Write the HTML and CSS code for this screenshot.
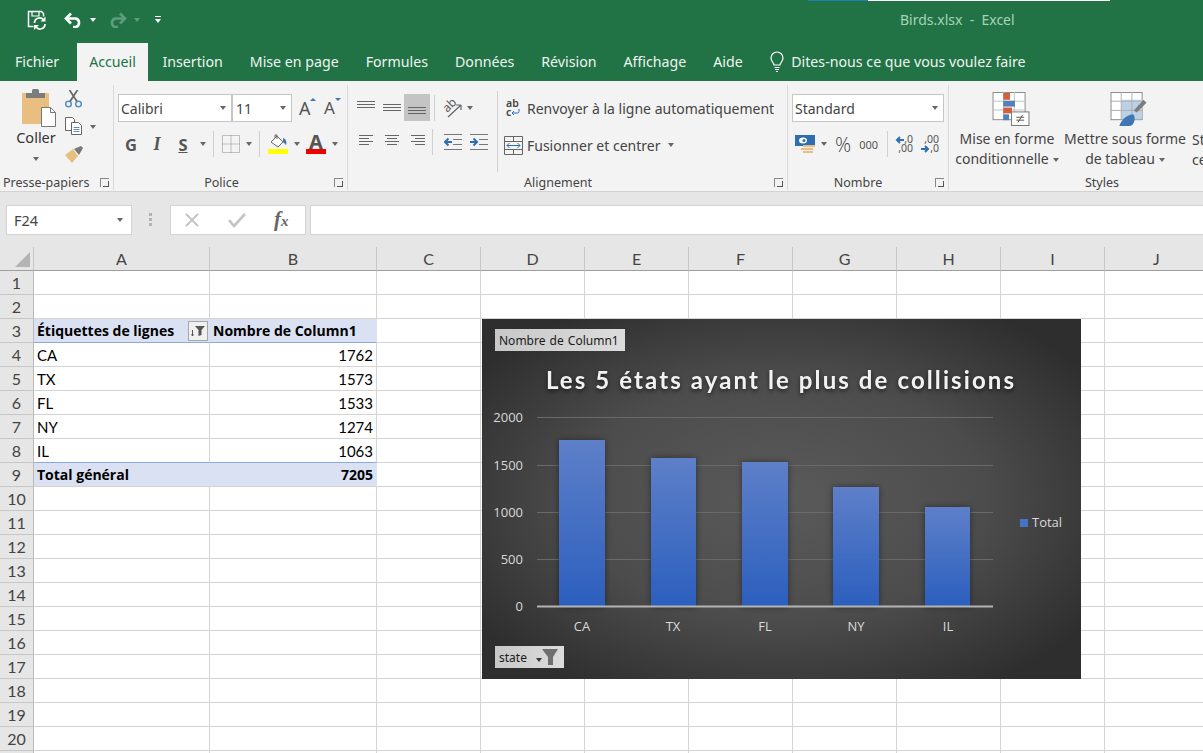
FILE: index.html
```html
<!DOCTYPE html>
<html lang="fr">

<head>
    <meta charset="utf-8">
    <title>Birds.xlsx - Excel</title>
    <link rel="stylesheet" href="styles.css">
</head>

<body>
    <header class="titlebar">
        <div class="topline"><span class="topline-blue"></span><span class="topline-white"></span></div>
        <div class="qat">
            <svg class="qat-save" width="20" height="20" viewBox="0 0 20 20" fill="none" stroke="#fff" stroke-width="1.500">
                <path d="M6.500 16.500H1.500v-15h13l2 2v3" />
                <path d="M5 2v4h7V2" stroke-width="1.200" />
                <path d="M7.500 13a5 5 0 0 1 9-3" stroke-width="1.800" />
                <path d="M18 14a5 5 0 0 1-9 3" stroke-width="1.800" />
                <path d="M18.500 6.500v5h-5zM7 20v-5h5z" fill="#fff" stroke="none" />
            </svg>
            <svg class="qat-undo" width="19" height="16" viewBox="0 0 19 16" fill="none" stroke="#fff" stroke-width="2.600">
                <path d="M2 6.500h10a4.500 4.500 0 0 1 0 8.500H9" />
                <path d="M7 1.500L2 6.500l5 5" />
            </svg>
            <span class="caret caret-white"></span>
            <svg class="qat-redo" width="19" height="16" viewBox="0 0 19 16" fill="none" stroke="#5f9c7d" stroke-width="2.600">
                <path d="M17 6.500H7a4.500 4.500 0 0 0 0 8.500h3" />
                <path d="M12 1.500l5 5-5 5" />
            </svg>
            <span class="caret caret-dim"></span>
            <span class="qat-more"></span>
        </div>
        <div class="doc-title">Birds.xlsx&nbsp; - &nbsp;Excel</div>
    </header>

    <nav class="tabs">
        <a class="tab tab-first">Fichier</a>
        <a class="tab tab-active">Accueil</a>
        <a class="tab">Insertion</a>
        <a class="tab">Mise en page</a>
        <a class="tab">Formules</a>
        <a class="tab">Données</a>
        <a class="tab">Révision</a>
        <a class="tab">Affichage</a>
        <a class="tab">Aide</a>
        <div class="tell">
            <svg width="16" height="22" viewBox="0 0 16 22" fill="none" stroke="#fff" stroke-width="1.200">
                <path d="M5 14c0-2-3-3.500-3-7a6 6 0 0 1 12 0c0 3.500-3 5-3 7z" />
                <path d="M5.500 16.500h5M6 18.500h4M7 20.500h2" />
            </svg>
            <span>Dites-nous ce que vous voulez faire</span>
        </div>
    </nav>

    <section class="ribbon">
        <div class="group group-clip">
            <div class="group-body clip-body">
                <div class="paste">
                    <svg width="34" height="38" viewBox="0 0 34 38">
                        <rect x="0" y="4" width="27" height="31" rx="1" fill="#e8bf80" />
                        <path d="M4 9V4h6V1.500A1.500 1.500 0 0 1 11.500 0h4A1.500 1.500 0 0 1 17 1.500V4h6v5z" fill="#7c7c7c" />
                        <path d="M19.500 18.500h9l5 5v14h-14z" fill="#fff" stroke="#777" />
                        <path d="M28.500 18.500v5h5" fill="none" stroke="#777" />
                    </svg>
                    <span class="paste-label">Coller</span>
                    <span class="caret"></span>
                </div>
                <div class="clip-tools">
                    <svg width="17" height="18" viewBox="0 0 17 18" fill="none" stroke="#5b8fc4" stroke-width="1.500">
                        <circle cx="3.500" cy="14" r="2.800" />
                        <circle cx="13.500" cy="14" r="2.800" />
                        <path d="M5 11.500L12.500 0M12 11.500L4.500 0" stroke="#666" stroke-width="1.700" />
                    </svg>
                    <div class="tool-row">
                        <svg width="18" height="19" viewBox="0 0 18 19" fill="#fff" stroke="#666">
                            <path d="M.5.500h7l2 2v11h-9z" />
                            <path d="M6.500 5.500h7l3 3v9h-10z" />
                            <path d="M8.500 10.500h6M8.500 12.500h6M8.500 14.500h6" stroke="#5b8fc4" />
                        </svg>
                        <span class="caret"></span>
                    </div>
                    <svg width="18" height="17" viewBox="0 0 18 17">
                        <path d="M0 9l8-6 5 7-6 7z" fill="#e8bf80" />
                        <path d="M9 3l7-3 2 2-4 7z" fill="#777" />
                    </svg>
                </div>
            </div>
            <div class="group-label">Presse-papiers<span class="launcher"></span></div>
        </div>

        <div class="group group-font">
            <div class="group-body stacked">
                <div class="ribbon-row">
                    <div class="combo combo-font"><span>Calibri</span><span class="caret"></span></div>
                    <div class="combo combo-size"><span>11</span><span class="caret"></span></div>
                    <span class="grow-btn">A<i class="tip tip-up"></i></span>
                    <span class="grow-btn grow-small">A<i class="tip tip-down"></i></span>
                </div>
                <div class="ribbon-row font-row">
                    <b class="fmt fmt-g">G</b>
                    <i class="fmt fmt-i">I</i>
                    <b class="fmt fmt-s">S</b>
                    <span class="caret"></span>
                    <span class="vsep"></span>
                    <svg width="18" height="18" viewBox="0 0 18 18" fill="none" stroke="#8a8a8a" stroke-dasharray="1 1">
                        <path d="M.5.500h17v17H.5zM9 .500v17M.5 9h17" />
                    </svg>
                    <span class="caret"></span>
                    <span class="vsep"></span>
                    <div class="colour-btn">
                        <svg width="20" height="15" viewBox="0 0 20 15">
                            <path d="M3 8l6-6 6 6-5 5z" fill="#fff" stroke="#666" />
                            <path d="M7 4V1h2v4" fill="none" stroke="#666" />
                            <path d="M15 4c3 1 4 4 3 7l-3-3z" fill="#3f77b5" />
                        </svg>
                        <span class="swatch swatch-yellow"></span>
                    </div>
                    <span class="caret"></span>
                    <div class="colour-btn colour-a">
                        <span class="colour-letter">A</span>
                        <span class="swatch swatch-red"></span>
                    </div>
                    <span class="caret"></span>
                </div>
            </div>
            <div class="group-label">Police<span class="launcher"></span></div>
        </div>

        <div class="group group-align">
            <div class="group-body align-body">
                <div class="stacked align-grid">
                    <div class="ribbon-row">
                        <span class="lines lines-top"><i></i><i></i><i></i></span>
                        <span class="lines lines-mid"><i></i><i></i><i></i></span>
                        <span class="lines lines-bot lines-on"><i></i><i></i><i></i></span>
                        <span class="vsep vsep-tall"></span>
                        <svg class="orient" width="22" height="20" viewBox="0 0 22 20" fill="none" stroke="#666">
                            <text transform="rotate(-45 8 8)" x="1" y="11" class="orient-text">ab</text>
                            <path d="M6 19L19 7M19 7h-5M19 7v5" stroke-width="1.200" />
                        </svg>
                        <span class="caret"></span>
                    </div>
                    <div class="ribbon-row align-row2">
                        <span class="lines lines-left"><i></i><i></i><i></i><i></i></span>
                        <span class="lines lines-center"><i></i><i></i><i></i><i></i></span>
                        <span class="lines lines-right"><i></i><i></i><i></i><i></i></span>
                        <span class="vsep vsep-tall"></span>
                        <svg class="indent-left" width="18" height="16" viewBox="0 0 18 16" fill="none" stroke="#777">
                            <path d="M0 .500h18M9 5.500h9M9 10.500h9M0 15.500h18" />
                            <path d="M1 8h7M4.500 4.500L1 8l3.500 3.500" stroke="#2e6fb0" stroke-width="2" />
                        </svg>
                        <svg class="indent-right" width="18" height="16" viewBox="0 0 18 16" fill="none" stroke="#777">
                            <path d="M0 .500h18M9 5.500h9M9 10.500h9M0 15.500h18" />
                            <path d="M0 8h7M3.500 4.500L7 8l-3.500 3.500" stroke="#2e6fb0" stroke-width="2" />
                        </svg>
                    </div>
                </div>
                <span class="vsep vsep-full"></span>
                <div class="stacked wrap-col">
                    <div class="ribbon-row wrap-row">
                        <span class="abc">ab<br>c<svg width="9" height="8" viewBox="0 0 9 8" fill="none" stroke="#2e6fb0"><path d="M8 1v2.500a1.500 1.500 0 0 1-1.500 1.500H1M3 3L1 5l2 2" /></svg></span>
                        <span>Renvoyer à la ligne automatiquement</span>
                    </div>
                    <div class="ribbon-row merge-row">
                        <svg width="19" height="19" viewBox="0 0 19 19" fill="none" stroke="#666">
                            <path d="M.5.500h18v18H.5zM.5 5.500h18M.5 13.500h18M9.500.500v5M9.500 13.500v5" />
                            <path d="M3 9.500h13M5.500 7L3 9.500 5.500 12M13.500 7l2.500 2.500-2.500 2.500" stroke="#2e6fb0" />
                        </svg>
                        <span>Fusionner et centrer</span>
                        <span class="caret"></span>
                    </div>
                </div>
            </div>
            <div class="group-label">Alignement<span class="launcher"></span></div>
        </div>

        <div class="group group-number">
            <div class="group-body stacked">
                <div class="ribbon-row">
                    <div class="combo combo-format"><span>Standard</span><span class="caret"></span></div>
                </div>
                <div class="ribbon-row number-row">
                    <svg width="21" height="19" viewBox="0 0 21 19">
                        <rect x="0" y="0" width="20" height="11" fill="#2e6fb0" />
                        <ellipse cx="8" cy="5.500" rx="4" ry="3" fill="#fff" />
                        <circle cx="9" cy="5.500" r="1.500" fill="#2e6fb0" />
                        <path d="M8 10h12v2H8zM6 13h12v2H6zM8 16h10v2H8z" fill="#e8bf80" />
                    </svg>
                    <span class="caret"></span>
                    <span class="percent">%</span>
                    <span class="thousands">000</span>
                    <span class="vsep"></span>
                    <span class="decimal">
                        <span class="dec-line"><svg width="9" height="8" viewBox="0 0 9 8" fill="none" stroke="#2e6fb0" stroke-width="2"><path d="M9 4H2M5 1L2 4l3 3" /></svg>,0</span>
                        <span class="dec-line">,00</span>
                    </span>
                    <span class="decimal decimal-b">
                        <span class="dec-line">,00</span>
                        <span class="dec-line"><svg width="9" height="8" viewBox="0 0 9 8" fill="none" stroke="#2e6fb0" stroke-width="2"><path d="M0 4h7M4 1l3 3-3 3" /></svg>,0</span>
                    </span>
                </div>
            </div>
            <div class="group-label">Nombre<span class="launcher"></span></div>
        </div>

        <div class="group group-styles">
            <div class="group-body styles-body">
                <div class="big-btn big-cond">
                    <svg width="38" height="35" viewBox="0 0 38 35">
                        <rect x=".5" y=".5" width="33" height="28" fill="#fff" stroke="#8a8a8a" />
                        <path d="M11.500 0v28M22.500 0v28M0 9.500h34M0 18.500h34" stroke="#c0c0c0" />
                        <rect x="11" y="1" width="7" height="7" fill="#d2603f" />
                        <rect x="11" y="9" width="12" height="6" fill="#4f81bd" />
                        <rect x="11" y="16" width="9" height="6" fill="#d2603f" />
                        <rect x="11" y="23" width="6" height="6" fill="#4f81bd" />
                        <rect x="19.500" y="20.500" width="18" height="14" fill="#fff" stroke="#777" />
                        <path d="M24.500 26h8M24.500 29h8M31 23.500l-5 8" fill="none" stroke="#555" />
                    </svg>
                    <span>Mise en forme<br>conditionnelle<i class="caret caret-inline"></i></span>
                </div>
                <div class="big-btn big-table">
                    <svg width="38" height="35" viewBox="0 0 38 35">
                        <rect x=".5" y=".5" width="32" height="28" fill="#fff" stroke="#8a8a8a" />
                        <rect x="11" y="8" width="21" height="20" fill="#bcd0e6" />
                        <path d="M11 0v28M22 0v28M0 9.500h33M0 19h33" stroke="#b0b0b0" />
                        <path d="M24 19l10-11 3 3-10 10z" fill="#7c7c7c" />
                        <path d="M9 35c2-6 7-11 14-12 4 3 1 12-3 12z" fill="#3f77b5" />
                    </svg>
                    <span>Mettre sous forme<br>de tableau<i class="caret caret-inline"></i></span>
                </div>
                <div class="big-btn big-cell">
                    <span>Styles de<br>cellule</span>
                </div>
            </div>
            <div class="group-label group-label-styles">Styles</div>
        </div>
    </section>

    <section class="formula">
        <div class="namebox"><span>F24</span><span class="caret"></span></div>
        <span class="grip"></span>
        <div class="fx-box">
            <svg width="16" height="16" viewBox="0 0 16 16" fill="none" stroke="#c4c4c4" stroke-width="1.800"><path d="M2 2l12 12M14 2L2 14" /></svg>
            <svg width="18" height="16" viewBox="0 0 18 16" fill="none" stroke="#c4c4c4" stroke-width="2.600"><path d="M1 8l5 6L17 2" /></svg>
            <span class="fx">f<small>x</small></span>
        </div>
        <div class="formula-input"></div>
    </section>

    <main class="sheet">
        <table class="cells">
            <colgroup>
                <col class="c-row"><col class="c-a"><col class="c-b"><col class="c-std" span="8">
            </colgroup>
            <thead>
                <tr>
                    <th class="corner"><span class="corner-tri"></span></th>
                    <th>A</th><th>B</th><th>C</th><th>D</th><th>E</th><th>F</th><th>G</th><th>H</th><th>I</th><th>J</th>
                </tr>
            </thead>
            <tbody>
                <tr><th>1</th><td></td><td></td><td></td><td></td><td></td><td></td><td></td><td></td><td></td><td></td></tr>
                <tr><th>2</th><td></td><td></td><td></td><td></td><td></td><td></td><td></td><td></td><td></td><td></td></tr>
                <tr class="pivot-head"><th>3</th>
                    <td class="pivot"><div class="pivot-label"><span>Étiquettes de lignes</span>
                        <span class="filter-btn"><svg width="14" height="12" viewBox="0 0 14 12"><path d="M4 1h10L10.500 5v5L7.500 11V5z" fill="#555" /><path d="M1.500 5v6M.5 9.500l1 1.500 1-1.500" fill="none" stroke="#555" /></svg></span></div></td>
                    <td class="pivot">Nombre de Column1</td>
                    <td></td><td></td><td></td><td></td><td></td><td></td><td></td><td></td></tr>
                <tr><th>4</th><td>CA</td><td class="num">1762</td><td></td><td></td><td></td><td></td><td></td><td></td><td></td><td></td></tr>
                <tr><th>5</th><td>TX</td><td class="num">1573</td><td></td><td></td><td></td><td></td><td></td><td></td><td></td><td></td></tr>
                <tr><th>6</th><td>FL</td><td class="num">1533</td><td></td><td></td><td></td><td></td><td></td><td></td><td></td><td></td></tr>
                <tr><th>7</th><td>NY</td><td class="num">1274</td><td></td><td></td><td></td><td></td><td></td><td></td><td></td><td></td></tr>
                <tr class="before-total"><th>8</th><td>IL</td><td class="num">1063</td><td></td><td></td><td></td><td></td><td></td><td></td><td></td><td></td></tr>
                <tr class="pivot-total"><th>9</th><td class="pivot">Total général</td><td class="pivot num">7205</td><td></td><td></td><td></td><td></td><td></td><td></td><td></td><td></td></tr>
                <tr><th>10</th><td></td><td></td><td></td><td></td><td></td><td></td><td></td><td></td><td></td><td></td></tr>
                <tr><th>11</th><td></td><td></td><td></td><td></td><td></td><td></td><td></td><td></td><td></td><td></td></tr>
                <tr><th>12</th><td></td><td></td><td></td><td></td><td></td><td></td><td></td><td></td><td></td><td></td></tr>
                <tr><th>13</th><td></td><td></td><td></td><td></td><td></td><td></td><td></td><td></td><td></td><td></td></tr>
                <tr><th>14</th><td></td><td></td><td></td><td></td><td></td><td></td><td></td><td></td><td></td><td></td></tr>
                <tr><th>15</th><td></td><td></td><td></td><td></td><td></td><td></td><td></td><td></td><td></td><td></td></tr>
                <tr><th>16</th><td></td><td></td><td></td><td></td><td></td><td></td><td></td><td></td><td></td><td></td></tr>
                <tr><th>17</th><td></td><td></td><td></td><td></td><td></td><td></td><td></td><td></td><td></td><td></td></tr>
                <tr><th>18</th><td></td><td></td><td></td><td></td><td></td><td></td><td></td><td></td><td></td><td></td></tr>
                <tr><th>19</th><td></td><td></td><td></td><td></td><td></td><td></td><td></td><td></td><td></td><td></td></tr>
                <tr><th>20</th><td></td><td></td><td></td><td></td><td></td><td></td><td></td><td></td><td></td><td></td></tr>
                <tr><th></th><td></td><td></td><td></td><td></td><td></td><td></td><td></td><td></td><td></td><td></td></tr>
            </tbody>
        </table>

        <div class="chart">
            <svg class="chart-svg" width="599" height="360" viewBox="0 0 599 360">
                <defs>
                    <linearGradient id="bar" x1="0" y1="0" x2="0" y2="1">
                        <stop offset="0" stop-color="#5e7fc8" />
                        <stop offset="1" stop-color="#2b5fbe" />
                    </linearGradient>
                    <filter id="soft" x="-30%" y="-10%" width="160%" height="120%">
                        <feDropShadow dx="0" dy="0" stdDeviation="3" flood-color="#000" flood-opacity=".45" />
                    </filter>
                </defs>
                <text class="chart-title" x="299" y="70" text-anchor="middle">Les 5 états ayant le plus de collisions</text>
                <g class="grid-lines">
                    <path d="M55 98.500h456M55 146.500h456M55 193.500h456M55 240.500h456" />
                </g>
                <g filter="url(#soft)">
                    <rect x="77" y="121" width="46" height="166.500" fill="url(#bar)" />
                    <rect x="169" y="139" width="45" height="148.500" fill="url(#bar)" />
                    <rect x="260" y="143" width="46" height="144.500" fill="url(#bar)" />
                    <rect x="351" y="168" width="46" height="119.500" fill="url(#bar)" />
                    <rect x="443" y="188" width="45" height="99.500" fill="url(#bar)" />
                </g>
                <path class="axis" d="M55 287.500h456" />
                <g class="y-labels" text-anchor="end">
                    <text x="41" y="103">2000</text>
                    <text x="41" y="151">1500</text>
                    <text x="41" y="198">1000</text>
                    <text x="41" y="245">500</text>
                    <text x="41" y="292">0</text>
                </g>
                <g class="x-labels" text-anchor="middle">
                    <text x="100" y="312">CA</text>
                    <text x="191" y="312">TX</text>
                    <text x="283" y="312">FL</text>
                    <text x="374" y="312">NY</text>
                    <text x="466" y="312">IL</text>
                </g>
                <rect x="538" y="200" width="8" height="8" fill="#4472c4" />
                <text class="legend" x="550" y="208">Total</text>
            </svg>
            <div class="field-btn field-top">Nombre de Column1</div>
            <div class="field-btn field-state">
                <span>state</span>
                <span class="caret caret-dark"></span>
                <svg width="16" height="16" viewBox="0 0 16 16"><path d="M0 0h16l-5 8v8H6V8z" fill="#6f6f6f" /></svg>
            </div>
        </div>
    </main>
</body>

</html>
```

FILE: styles.css
```css
* {
    box-sizing: border-box;
}

html, body {
    margin: 0;
    height: 753px;
    overflow: hidden;
    background: #fff;
}

body {
    font-family: "Noto Sans", "Open Sans", sans-serif;
    font-size: 14px;
    color: #444;
}

.caret {
    display: inline-block;
    width: 0;
    height: 0;
    border-left: 3.500px solid transparent;
    border-right: 3.500px solid transparent;
    border-top: 4px solid #666;
    flex: none;
}

.caret-white { border-top-color: #fff; }
.caret-dim { border-top-color: #5f9c7d; }
.caret-dark { border-top-color: #333; }

/* title bar */
.titlebar {
    height: 43px;
    background: #217346;
    position: relative;
    display: flex;
    align-items: center;
}

.topline {
    position: absolute;
    top: 0;
    left: 808px;
    height: 1px;
    display: flex;
}

.topline-blue { width: 60px; background: #1f7fb0; }
.topline-white { width: 242px; background: #fff; }

.qat {
    display: flex;
    align-items: center;
    padding-left: 27px;
    margin-top: -4px;
}

.qat .caret { margin-left: 7px; }
.qat-undo { margin-left: 17px; }
.qat-redo { margin-left: 12px; }
.qat-more {
    margin-left: 15px;
    width: 6px;
    height: 7px;
    border-top: 1px solid #fff;
    position: relative;
}

.qat-more::after {
    content: "";
    position: absolute;
    left: 0;
    top: 2px;
    border-left: 3px solid transparent;
    border-right: 3px solid transparent;
    border-top: 4px solid #fff;
}

.doc-title {
    margin-left: 739px;
    margin-top: -4px;
    color: #a6d3b9;
    font-size: 14px;
}

/* tabs */
.tabs {
    height: 38px;
    background: #217346;
    display: flex;
    align-items: stretch;
    color: #eef5f0;
}

.tab {
    padding: 0 13.500px;
    line-height: 37px;
    font-size: 14.200px;
}

.tab-first { padding-left: 15px; padding-right: 17.500px; }

.tab-active {
    background: #f3f3f3;
    color: #217346;
    padding: 0 12.500px;
    height: 38px;
}

.tab-active + .tab { padding-left: 14px; }

.tell {
    display: flex;
    align-items: center;
    gap: 6px;
    margin-left: 13px;
    margin-top: -1px;
    font-size: 14.200px;
}

/* ribbon */
.ribbon {
    height: 111px;
    background: #f3f3f3;
    border-bottom: 1px solid #d2d2d2;
    display: flex;
    overflow: hidden;
    position: relative;
}

.group {
    flex: none;
    height: 105px;
    margin-top: 4px;
    border-right: 1px solid #d9d9d9;
    display: flex;
    flex-direction: column;
    position: relative;
}

.group-clip { width: 114px; }
.group-font { width: 234px; padding-left: 4px; }
.group-align { width: 440px; padding-left: 7px; }
.group-number { width: 161px; padding-left: 4px; }
.group-styles { width: 260px; border-right: 0; }

.group-body {
    flex: 1;
    min-height: 0;
}

.group-label {
    height: 21px;
    font-size: 12.500px;
    line-height: 21px;
    text-align: center;
    position: relative;
    top: 3px;
    color: #444;
}

.group-clip .group-label { text-align: left; padding-left: 3px; }
.group-font .group-label { padding-right: 22px; }
.group-align .group-label { padding-right: 26px; }
.group-number .group-label { padding-right: 24px; }
.group-label-styles { width: 306px; }

.launcher {
    position: absolute;
    right: 4px;
    top: 6px;
    width: 9px;
    height: 9px;
    border-left: 1px solid #888;
    border-top: 1px solid #888;
}

.launcher::after {
    content: "";
    position: absolute;
    right: 0;
    bottom: 0;
    width: 5px;
    height: 5px;
    border-right: 1px solid #555;
    border-bottom: 1px solid #555;
}

.stacked {
    display: flex;
    flex-direction: column;
}

.ribbon-row {
    display: flex;
    align-items: center;
}

.vsep {
    width: 1px;
    height: 26px;
    background: #d0d0d0;
    flex: none;
}

/* clipboard */
.clip-body {
    display: flex;
    padding-left: 14px;
}

.paste {
    width: 44px;
    display: flex;
    flex-direction: column;
    align-items: center;
    padding-top: 4px;
}

.paste svg { margin-left: 5px; }
.paste-label { font-size: 14.500px; margin-top: 0; line-height: 20px; color: #333; }
.paste .caret { margin-top: 10px; }

.clip-tools {
    display: flex;
    flex-direction: column;
    padding: 5px 0 0 7px;
    gap: 9px;
}

.tool-row {
    display: flex;
    align-items: center;
    gap: 7px;
}

.clip-tools > svg:last-child { margin-top: 1px; }

/* font */
.stacked { padding-top: 9px; }

.combo {
    height: 28px;
    background: #fff;
    border: 1px solid #c6c6c6;
    display: flex;
    align-items: center;
    justify-content: space-between;
    padding: 0 5px 0 2px;
    font-size: 14px;
    color: #444;
}

.combo-font { width: 114px; }
.combo-size { width: 60px; margin-left: 0; padding-left: 3px; }
.combo-format { width: 152px; }

.grow-btn {
    font-size: 18px;
    color: #555;
    margin-left: 7px;
    width: 17px;
    position: relative;
    line-height: 20px;
}

.grow-btn + .grow-btn { margin-left: 8px; }
.grow-small { font-size: 17px; }

.tip {
    position: absolute;
    right: 0;
    top: 0;
    border-left: 3px solid transparent;
    border-right: 3px solid transparent;
}

.tip-up { border-bottom: 3px solid #3f77b5; }
.tip-down { border-top: 3px solid #3f77b5; }

.font-row {
    margin-top: 9px;
    height: 26px;
    padding-left: 6px;
}

.fmt {
    font-family: "Noto Sans", sans-serif;
    font-size: 16.500px;
    width: 14px;
    text-align: center;
    color: #555;
    font-weight: bold;
}

.fmt-i { margin-left: 12px; font-family: "Liberation Serif", serif; font-size: 18px; }
.fmt-s { margin-left: 12px; text-decoration: underline; }

.font-row .caret { margin-left: 10px; }
.font-row .vsep { margin-left: 7px; margin-right: 8px; }
.font-row .vsep + svg + .caret { margin-left: 6px; }
.font-row .vsep + .colour-btn { margin-left: 0; }
.font-row .caret + .colour-btn { margin-left: 6px; }
.font-row .colour-btn + .caret { margin-left: 6px; }

.colour-btn {
    width: 20px;
    display: flex;
    flex-direction: column;
    align-items: center;
}

.swatch {
    width: 20px;
    height: 5px;
    display: block;
}

.swatch-yellow { background: #ffff00; }
.swatch-red { background: #ee0000; }

.colour-letter {
    font-weight: bold;
    font-size: 20px;
    line-height: 15px;
    color: #555;
}

/* alignment */
.align-body {
    display: flex;
}

.align-grid {
    width: 142px;
}

.lines {
    width: 26px;
    height: 27px;
    display: flex;
    flex-direction: column;
    flex: none;
    gap: 2px;
}

.lines i {
    display: block;
    height: 1px;
    background: #666;
    width: 18px;
    flex: none;
}

.lines-top { padding: 7px 0 0 2px; }
.lines-mid { padding: 10px 0 0 2px; margin-left: 0; }
.lines-bot { padding: 13px 0 0 4px; }
.lines-on { background: #c4c4c4; margin-left: -3px; }
.lines-bot + .vsep { margin-left: 4px; }
.orient { margin-left: 7px; }
.orient + .caret { margin-left: 3px; }

.orient-text {
    font-size: 12px;
    fill: #555;
    stroke: none;
}

.align-row2 {
    height: 26px;
    margin-top: 8px;
}

.align-row2 .lines {
    padding: 6px 0 0 4px;
    gap: 2px;
}

.align-row2 .lines i { width: 14px; }
.align-row2 .lines-center i:nth-child(even) { width: 10px; margin-left: 2px; }
.align-row2 .lines-left i:nth-child(even) { width: 10px; }
.align-row2 .lines-right i:nth-child(even) { width: 10px; margin-left: 4px; }
.align-row2 .vsep { margin-left: -1px; }
.indent-left { margin-left: 8px; }
.indent-right { margin-left: 8px; }
.align-row2 .indent-left { margin-left: 11px; }

.vsep-full {
    height: 81px;
    margin: 6px 6px 0 0;
}

.wrap-col {
    padding-top: 9px;
    gap: 9px;
    padding-left: 0;
}

.wrap-row {
    height: 28px;
    gap: 4px;
    padding-left: 2px;
}

.merge-row {
    height: 28px;
    gap: 4px;
}

.merge-row .caret { margin-left: 4px; }

.abc {
    font-size: 10.500px;
    line-height: 9px;
    width: 17px;
    color: #444;
    font-weight: 600;
}

/* number */
.number-row {
    height: 26px;
    margin-top: 9px;
    padding-left: 3px;
}

.number-row .caret { margin-left: 5px; }

.percent {
    margin-left: 8px;
    font-family: "Open Sans", sans-serif;
    font-weight: 300;
    font-size: 20px;
    color: #444;
}

.thousands { margin-left: 8px; font-size: 11px; color: #555; }
.number-row .vsep { margin: 0 9px; }

.decimal {
    display: flex;
    flex-direction: column;
    align-items: flex-end;
    font-size: 10.500px;
    line-height: 9px;
    width: 16px;
    color: #555;
}

.dec-line {
    display: flex;
    align-items: center;
    height: 9px;
}

.decimal-b { margin-left: 10px; }

/* styles */
.styles-body {
    display: flex;
    padding-left: 6px;
}

.big-btn {
    display: flex;
    flex-direction: column;
    align-items: center;
    text-align: center;
    font-size: 14px;
    line-height: 20px;
    padding-top: 7px;
    color: #444;
    white-space: nowrap;
    flex: none;
}

.big-btn svg { margin-bottom: 3px; }
.big-cond { width: 104px; }
.big-cond svg { margin-left: 8px; }
.big-table { width: 130px; margin-left: 1px; }
.big-table svg { margin-left: 8px; }
.big-cell { margin-left: 2px; padding-top: 45px; width: 60px; align-items: flex-start; text-align: left; }

.caret-inline {
    margin-left: 4px;
    vertical-align: middle;
}

/* formula bar */
.formula {
    height: 55px;
    background: #e6e6e6;
    display: flex;
    align-items: flex-start;
    padding: 13px 0 0 6px;
}

.namebox {
    width: 126px;
    height: 30px;
    background: #fff;
    border: 1px solid #d4d4d4;
    display: flex;
    align-items: center;
    justify-content: space-between;
    padding: 0 8px 0 7px;
    font-size: 14.500px;
}

.grip {
    width: 3px;
    height: 13px;
    margin: 8px 18px 0 17px;
    background: repeating-linear-gradient(#b4b4b4 0 3px, transparent 3px 5px);
}

.fx-box {
    width: 136px;
    height: 30px;
    background: #fff;
    border: 1px solid #d4d4d4;
    display: flex;
    align-items: center;
    gap: 28px;
    padding-left: 13px;
}

.fx {
    font-family: "Liberation Serif", serif;
    font-style: italic;
    font-weight: bold;
    font-size: 21px;
    color: #666;
    line-height: 24px;
}

.fx small { font-size: 15px; }

.formula-input {
    flex: 1;
    height: 30px;
    margin-left: 4px;
    background: #fff;
    border: 1px solid #d4d4d4;
    border-right: 0;
}

/* sheet */
.sheet {
    position: relative;
    height: 260px;
}

.cells {
    border-collapse: separate;
    border-spacing: 0;
    table-layout: fixed;
    width: 1209px;
    font-family: "Lato", "Liberation Sans", sans-serif;
    font-size: 15px;
    color: #000;
}

.c-row { width: 34px; }
.c-a { width: 176px; }
.c-b { width: 167px; }
.c-std { width: 104px; }

.cells tr { height: 24px; }

.cells th {
    background: #e6e6e6;
    font-weight: normal;
    color: #444;
    border-right: 1px solid #b9b9b9;
    border-bottom: 1px solid #c6c6c6;
    padding: 0;
    font-size: 16px;
}

.cells thead th {
    border-right: 1px solid #c6c6c6;
    border-bottom: 1px solid #9f9f9f;
}

.cells td {
    border-right: 1px solid #d4d4d4;
    border-bottom: 1px solid #d4d4d4;
    padding: 0 3px;
    white-space: nowrap;
    overflow: hidden;
    height: 24px;
}

.cells .num { text-align: right; }

.cells .pivot {
    background: #d9e1f2;
    font-family: "Open Sans", sans-serif;
    font-size: 14px;
    font-weight: bold;
    border-right-color: #d9e1f2;
}

.pivot-head .pivot { border-bottom-color: #8ea9db; }
.before-total td:nth-child(2), .before-total td:nth-child(3) { border-bottom-color: #8ea9db; }
.pivot-total .pivot { border-bottom-color: #d4d4d4; }

.pivot-label {
    display: flex;
    justify-content: space-between;
    align-items: center;
}

.filter-btn {
    width: 20px;
    height: 20px;
    margin-right: -2px;
    background: #f0f0f0;
    border: 1px solid #a6a6a6;
    display: flex;
    align-items: center;
    justify-content: center;
}

.corner { position: relative; }

.corner-tri {
    position: absolute;
    left: 15px;
    top: 5px;
    width: 0;
    height: 0;
    border-left: 15px solid transparent;
    border-bottom: 15px solid #b4b4b4;
}

/* chart floats over the cells */
.chart {
    position: absolute;
    left: 482px;
    top: 72px;
    width: 599px;
    height: 360px;
    background: radial-gradient(ellipse 62% 62% at 50% 50%, #5a5a5a 0%, #4c4c4c 55%, #2e2e2e 100%);
}

.chart-svg {
    display: block;
    font-family: "Open Sans", "Noto Sans", sans-serif;
}

.chart-title {
    font-family: "Lato", "Open Sans", sans-serif;
    font-size: 24px;
    font-weight: bold;
    fill: #f2f2f2;
    letter-spacing: 2.100px;
    filter: drop-shadow(0 2px 2px rgba(0, 0, 0, .6));
}

.grid-lines path {
    stroke: #6a6a6a;
    fill: none;
}

.axis {
    stroke: #b4b4b4;
    stroke-width: 2;
    fill: none;
}

.y-labels text, .x-labels text, .legend {
    font-size: 13px;
    fill: #d9d9d9;
}

.field-btn {
    position: absolute;
    background: linear-gradient(90deg, #c8c8c8, #dcdcdc);
    color: #1a1a1a;
    font-size: 12px;
    height: 22px;
    display: flex;
    align-items: center;
    padding-left: 4px;
    left: 13px;
}

.field-top {
    top: 10px;
    width: 130px;
    word-spacing: 1px;
}

.field-state {
    top: 327px;
    width: 69px;
}

.field-state .caret {
    margin-left: 9px;
    margin-top: 6px;
}

.field-state svg { margin-left: 0; }
```
